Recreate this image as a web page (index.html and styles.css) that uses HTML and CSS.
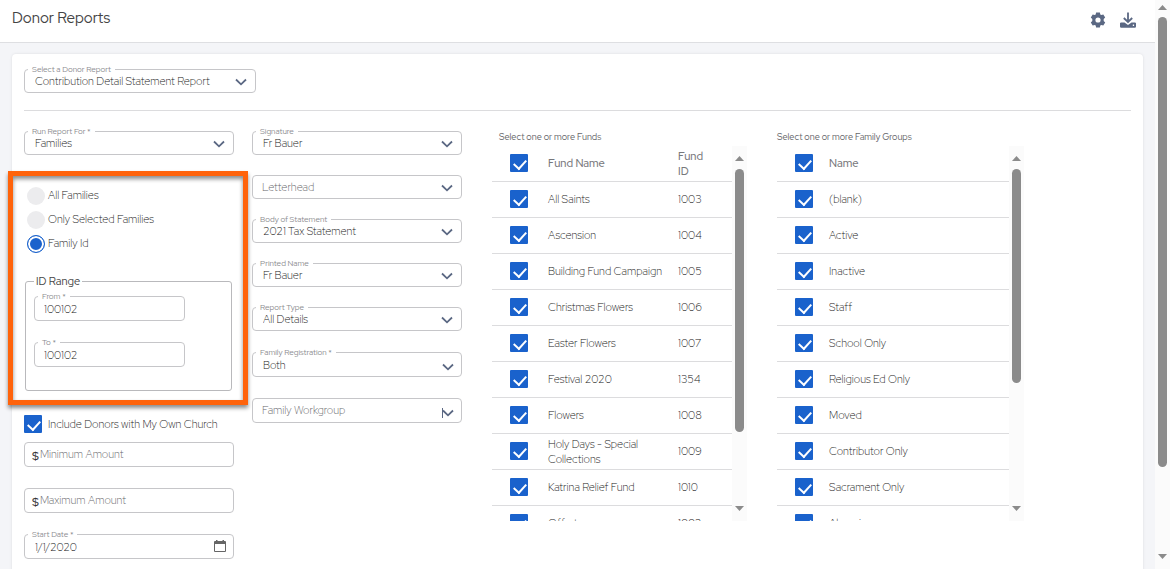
FILE: index.html
```html
<!DOCTYPE html>
<html lang="en">
<head>
    <meta charset="UTF-8">
    <meta name="viewport" content="width=device-width, initial-scale=1.0">
    <title>Donor Reports</title>
    <link rel="stylesheet" href="styles.css">
</head>
<body>
    <svg class="defs" aria-hidden="true">
        <symbol id="chevron" viewBox="0 0 12 8"><path d="M1 1.5L6 6.3L11 1.5" fill="none" stroke="currentColor" stroke-width="1.8"/></symbol>
        <symbol id="up" viewBox="0 0 9 5"><path d="M4.5 0L9 5H0z" fill="currentColor"/></symbol>
        <symbol id="down" viewBox="0 0 9 5"><path d="M4.5 5L9 0H0z" fill="currentColor"/></symbol>
    </svg>
    <div class="app">
        <div class="page">
            <header class="topbar">
                <h1>Donor Reports</h1>
                <div class="actions">
                    <button type="button" aria-label="Settings">
                        <svg width="16" height="16" viewBox="0 0 16 16"><path fill="currentColor" fill-rule="evenodd" d="M6.1 .5h3.8l.4 2 1 .6 2-.7 1.900 3.200-1.500 1.400v2l1.500 1.400-1.900 3.200-2-.7-1 .6-.4 2H6.100l-.4-2-1-.6-2 .7L.8 10.400 2.300 9V7L.8 5.600l1.900-3.200 2 .7 1-.6zM8 5.400a2.600 2.600 0 1 0 0 5.200 2.600 2.600 0 0 0 0-5.200z"/></svg>
                    </button>
                    <button type="button" aria-label="Download">
                        <svg width="16" height="16" viewBox="0 0 16 16"><path d="M8 .5V10M3.800 6L8 10l4.200-4" fill="none" stroke="currentColor" stroke-width="1.800"/><path fill="currentColor" fill-rule="evenodd" d="M1.500 10.500h3L8 13l3.500-2.500h3A1.300 1.300 0 0 1 16 12v2.500a1.300 1.300 0 0 1-1.300 1.300H1.300A1.300 1.300 0 0 1 0 14.500V12a1.300 1.300 0 0 1 1.500-1.500zM12.800 12.600v1.300h1.300v-1.300z"/></svg>
                    </button>
                </div>
            </header>

            <main class="card">
                <div class="report-row">
                    <div class="field report">
                        <label for="report">Select a Donor Report</label>
                        <select id="report"><option>Contribution Detail Statement Report</option></select>
                        <svg class="chevron"><use href="#chevron"/></svg>
                    </div>
                </div>

                <form class="columns">
                    <div class="col">
                        <div class="field">
                            <label for="runFor">Run Report For *</label>
                            <select id="runFor"><option>Families</option></select>
                            <svg class="chevron"><use href="#chevron"/></svg>
                        </div>

                        <div class="highlight">
                            <div class="radios">
                                <label><input type="radio" name="who">All Families</label>
                                <label><input type="radio" name="who">Only Selected Families</label>
                                <label><input type="radio" name="who" checked>Family Id</label>
                            </div>
                            <fieldset class="range">
                                <legend>ID Range</legend>
                                <div class="field tall">
                                    <label for="from">From *</label>
                                    <input type="text" id="from" value="100102">
                                </div>
                                <div class="field tall">
                                    <label for="to">To *</label>
                                    <input type="text" id="to" value="100102">
                                </div>
                            </fieldset>
                        </div>

                        <label class="include"><input type="checkbox" checked>Include Donors with My Own Church</label>

                        <div class="amounts">
                            <div class="field tall money">
                                <span>$</span>
                                <input type="text" placeholder="Minimum Amount" aria-label="Minimum Amount">
                            </div>
                            <div class="field tall money">
                                <span>$</span>
                                <input type="text" placeholder="Maximum Amount" aria-label="Maximum Amount">
                            </div>
                            <div class="field tall">
                                <label for="start">Start Date *</label>
                                <input type="text" id="start" value="1/1/2020">
                                <svg class="calendar" viewBox="0 0 12 12"><path fill="currentColor" fill-rule="evenodd" d="M2 0h1.500v1h5V0H10v1h1a1 1 0 0 1 1 1v9a1 1 0 0 1-1 1H1a1 1 0 0 1-1-1V2a1 1 0 0 1 1-1h1zM1 4v7h10V4z"/></svg>
                            </div>
                        </div>
                    </div>

                    <div class="col settings">
                        <div class="field">
                            <label for="signature">Signature</label>
                            <select id="signature"><option>Fr Bauer</option></select>
                            <svg class="chevron"><use href="#chevron"/></svg>
                        </div>
                        <div class="field">
                            <select class="empty" aria-label="Letterhead"><option>Letterhead</option></select>
                            <svg class="chevron"><use href="#chevron"/></svg>
                        </div>
                        <div class="field">
                            <label for="statement">Body of Statement</label>
                            <select id="statement"><option>2021 Tax Statement</option></select>
                            <svg class="chevron"><use href="#chevron"/></svg>
                        </div>
                        <div class="field">
                            <label for="printed">Printed Name</label>
                            <select id="printed"><option>Fr Bauer</option></select>
                            <svg class="chevron"><use href="#chevron"/></svg>
                        </div>
                        <div class="field">
                            <label for="type">Report Type</label>
                            <select id="type"><option>All Details</option></select>
                            <svg class="chevron"><use href="#chevron"/></svg>
                        </div>
                        <div class="field tall">
                            <label for="registration">Family Registration *</label>
                            <select id="registration"><option>Both</option></select>
                            <svg class="chevron"><use href="#chevron"/></svg>
                        </div>
                        <div class="field tall workgroup">
                            <select class="empty" aria-label="Family Workgroup"><option>Family Workgroup</option></select>
                            <svg class="chevron"><use href="#chevron"/></svg>
                        </div>
                    </div>

                    <section class="picker funds">
                        <h2>Select one or more Funds</h2>
                        <div class="scroller">
                            <table>
                                <thead>
                                    <tr><th class="tick"><input type="checkbox" aria-label="All funds" checked></th><th>Fund Name</th><th class="id">Fund ID</th></tr>
                                </thead>
                                <tbody>
                                    <tr><td><input type="checkbox" aria-label="All Saints" checked></td><td>All Saints</td><td>1003</td></tr>
                                    <tr><td><input type="checkbox" aria-label="Ascension" checked></td><td>Ascension</td><td>1004</td></tr>
                                    <tr><td><input type="checkbox" aria-label="Building Fund Campaign" checked></td><td>Building Fund Campaign</td><td>1005</td></tr>
                                    <tr><td><input type="checkbox" aria-label="Christmas Flowers" checked></td><td>Christmas Flowers</td><td>1006</td></tr>
                                    <tr><td><input type="checkbox" aria-label="Easter Flowers" checked></td><td>Easter Flowers</td><td>1007</td></tr>
                                    <tr><td><input type="checkbox" aria-label="Festival 2020" checked></td><td>Festival 2020</td><td>1354</td></tr>
                                    <tr><td><input type="checkbox" aria-label="Flowers" checked></td><td>Flowers</td><td>1008</td></tr>
                                    <tr><td><input type="checkbox" aria-label="Holy Days - Special Collections" checked></td><td>Holy Days - Special Collections</td><td>1009</td></tr>
                                    <tr><td><input type="checkbox" aria-label="Katrina Relief Fund" checked></td><td>Katrina Relief Fund</td><td>1010</td></tr>
                                    <tr><td><input type="checkbox" aria-label="Offertory" checked></td><td>Offertory</td><td>1002</td></tr>
                                </tbody>
                            </table>
                            <div class="scrollbar">
                                <svg><use href="#up"/></svg>
                                <div class="track"><div class="thumb"></div></div>
                                <svg><use href="#down"/></svg>
                            </div>
                        </div>
                    </section>

                    <section class="picker groups">
                        <h2>Select one or more Family Groups</h2>
                        <div class="scroller">
                            <table>
                                <thead>
                                    <tr><th class="tick"><input type="checkbox" aria-label="All groups" checked></th><th>Name</th></tr>
                                </thead>
                                <tbody>
                                    <tr><td><input type="checkbox" aria-label="(blank)" checked></td><td>(blank)</td></tr>
                                    <tr><td><input type="checkbox" aria-label="Active" checked></td><td>Active</td></tr>
                                    <tr><td><input type="checkbox" aria-label="Inactive" checked></td><td>Inactive</td></tr>
                                    <tr><td><input type="checkbox" aria-label="Staff" checked></td><td>Staff</td></tr>
                                    <tr><td><input type="checkbox" aria-label="School Only" checked></td><td>School Only</td></tr>
                                    <tr><td><input type="checkbox" aria-label="Religious Ed Only" checked></td><td>Religious Ed Only</td></tr>
                                    <tr><td><input type="checkbox" aria-label="Moved" checked></td><td>Moved</td></tr>
                                    <tr><td><input type="checkbox" aria-label="Contributor Only" checked></td><td>Contributor Only</td></tr>
                                    <tr><td><input type="checkbox" aria-label="Sacrament Only" checked></td><td>Sacrament Only</td></tr>
                                    <tr><td><input type="checkbox" aria-label="Alumni" checked></td><td>Alumni</td></tr>
                                </tbody>
                            </table>
                            <div class="scrollbar">
                                <svg><use href="#up"/></svg>
                                <div class="track"><div class="thumb"></div></div>
                                <svg><use href="#down"/></svg>
                            </div>
                        </div>
                    </section>
                </form>
            </main>
        </div>

        <div class="scrollbar main-scroll">
            <svg><use href="#up"/></svg>
            <div class="track"><div class="thumb"></div></div>
            <svg><use href="#down"/></svg>
        </div>
    </div>
</body>
</html>
```
FILE: styles.css
```css
* {
    box-sizing: border-box;
}
body {
    margin: 0;
    font-family: 'Red Hat Display', 'Red Hat Text', Inter, sans-serif;
    font-size: 11px;
    font-weight: 300;
    line-height: 15px;
    color: #222;
    background: #f4f5f8;
}
.defs {
    display: none;
}
button, input, select {
    font: inherit;
    color: inherit;
}
.app {
    display: flex;
    height: 100vh;
    overflow: hidden;
}
.page {
    flex: 1;
    min-width: 0;
}
.topbar {
    display: flex;
    justify-content: space-between;
    align-items: center;
    height: 43px;
    padding: 0 19px 2px 12px;
    background: #fff;
    border-bottom: 1px solid #dedfe2;
}
h1 {
    margin: 0;
    padding-bottom: 5px;
    font-size: 15px;
    font-weight: 400;
    line-height: 20px;
    color: #444;
}
.actions {
    display: flex;
    gap: 14px;
}
.actions button {
    display: flex;
    padding: 0;
    border: 0;
    background: none;
    color: #5b6883;
    cursor: pointer;
}
.card {
    margin: 11px 12px 0;
    padding: 15px 12px 12px;
    min-height: 100vh;
    background: #fff;
    border-radius: 4px;
    box-shadow: 0 0 3px rgba(0, 0, 0, 0.1);
}
.report-row {
    padding-bottom: 17px;
    border-bottom: 1px solid #dcdcde;
}
.columns {
    display: flex;
    padding-top: 20px;
}
.col {
    flex: 0 0 210px;
    margin-right: 18px;
}

/* outlined fields */
.field {
    position: relative;
    display: flex;
    height: 24px;
    border: 1px solid #c6c6c9;
    border-radius: 4px;
}
.field.tall {
    height: 25px;
}
.field.report {
    width: 232px;
}
.field label {
    position: absolute;
    top: -7px;
    left: 3px;
    padding: 0 4px;
    font-size: 8px;
    font-weight: 400;
    line-height: 12px;
    color: #8c8c90;
    background: #fff;
}
.field select,
.field input {
    flex: 1;
    min-width: 0;
    padding: 0 10px;
    border: 0;
    outline: none;
    background: none;
    appearance: none;
}
.field.tall label ~ input,
.field.tall label ~ select {
    padding-top: 2px;
}
.field select.empty {
    padding-left: 9px;
    color: #66666a;
}
.field input::placeholder {
    color: #66666a;
    opacity: 1;
}
.chevron {
    position: absolute;
    top: 8px;
    right: 8px;
    width: 12px;
    height: 8px;
    color: #5b6883;
    pointer-events: none;
}
.tall .chevron {
    top: 10px;
    right: 7px;
}
.workgroup::after {
    content: "";
    position: absolute;
    top: 9px;
    right: 18px;
    width: 1px;
    height: 10px;
    background: #5b6883;
}
.calendar {
    width: 12px;
    height: 12px;
    margin: 5px 7px;
    color: #666;
}
.settings {
    display: flex;
    flex-direction: column;
    gap: 20px;
    margin-right: 30px;
}
.settings .tall {
    margin-top: 1px;
}

/* radios and id range */
.highlight {
    margin: 16px -14px 0 -16px;
    padding: 9px 11px 9px 12px;
    border: 5px solid #ff630b;
    box-shadow: 0 3px 4px rgba(0, 0, 0, 0.45), inset 0 3px 4px rgba(0, 0, 0, 0.45);
}
.radios {
    display: flex;
    flex-direction: column;
    gap: 4px;
    padding-left: 2px;
}
.radios label {
    display: flex;
    align-items: center;
    gap: 3px;
    height: 20px;
}
.radios input {
    width: 18px;
    height: 18px;
    margin: 2px 0 0;
    appearance: none;
    border-radius: 50%;
    background: #ececee;
}
.radios input:checked {
    border: 1px solid #1a62cc;
    background: #1a62cc;
    box-shadow: inset 0 0 0 2px #fff;
}
.range {
    margin: 21px 0 0;
    padding: 7px 8px 23px;
    border: 1px solid #b9b9bc;
    border-radius: 3px;
}
.range legend {
    padding: 0 2px;
    font-weight: 400;
    color: #444;
}
.range .field {
    width: 151px;
}
.range .field + .field {
    margin-top: 21px;
}
.range .field input {
    padding-left: 9px;
}
input[type="checkbox"] {
    display: block;
    flex: none;
    width: 18px;
    height: 18px;
    margin: 0;
    appearance: none;
    border-radius: 1px;
    background: #1a62cc;
    overflow: hidden;
}
input[type="checkbox"]:checked::after {
    content: "";
    display: block;
    width: 6px;
    height: 10px;
    margin: 3px 0 0 6px;
    border: solid #fff;
    border-width: 0 2px 2px 0;
    transform: rotate(42deg);
}
.include {
    display: flex;
    align-items: center;
    gap: 6px;
    margin: 10px 0 9px;
}
.amounts {
    display: flex;
    flex-direction: column;
    gap: 21px;
}
.money span {
    padding: 6px 1px 0 7px;
    font-size: 12px;
    font-weight: 500;
    color: #333;
}
.money input {
    padding-left: 0;
}

/* fund and group pickers */
.picker h2 {
    margin: 0 0 3px;
    padding-left: 7px;
    font-size: 9px;
    font-weight: 400;
    line-height: 12px;
    color: #66666a;
}
.funds {
    width: 255px;
    margin-right: 30px;
}
.groups {
    width: 247px;
}
.groups h2 {
    padding-left: 0;
}
.scroller {
    display: flex;
    height: 375px;
    overflow: hidden;
}
.picker table {
    flex: 1;
    table-layout: fixed;
    border-spacing: 0;
}
.picker tr {
    height: 36px;
}
.picker th,
.picker td {
    height: 36px;
    padding: 0;
    text-align: left;
    border-bottom: 1px solid #dcdcde;
}
.picker th {
    font-weight: 500;
    color: #77777b;
}
.picker .tick {
    width: 56px;
}
.groups .tick {
    width: 52px;
}
.picker td:first-child,
.picker th:first-child {
    padding: 0 0 1px 18px;
}
.picker .id {
    width: 54px;
    padding-right: 20px;
}

/* scrollbars */
.scrollbar {
    display: flex;
    flex-direction: column;
    align-items: center;
    flex: none;
    width: 15px;
    padding: 10px 0;
    background: #fbfbfb;
    color: #8b8b8b;
}
.scrollbar svg {
    flex: none;
    width: 9px;
    height: 5px;
}
.track {
    flex: 1;
    width: 9px;
    padding: 8px 0;
}
.thumb {
    height: 80%;
    border-radius: 5px;
    background: #8b8b8b;
}
.groups .thumb {
    height: 65%;
}
.main-scroll {
    padding: 5px 0 10px;
}
.main-scroll .track {
    padding-top: 7px;
}
.main-scroll .thumb {
    height: 85%;
}
```
